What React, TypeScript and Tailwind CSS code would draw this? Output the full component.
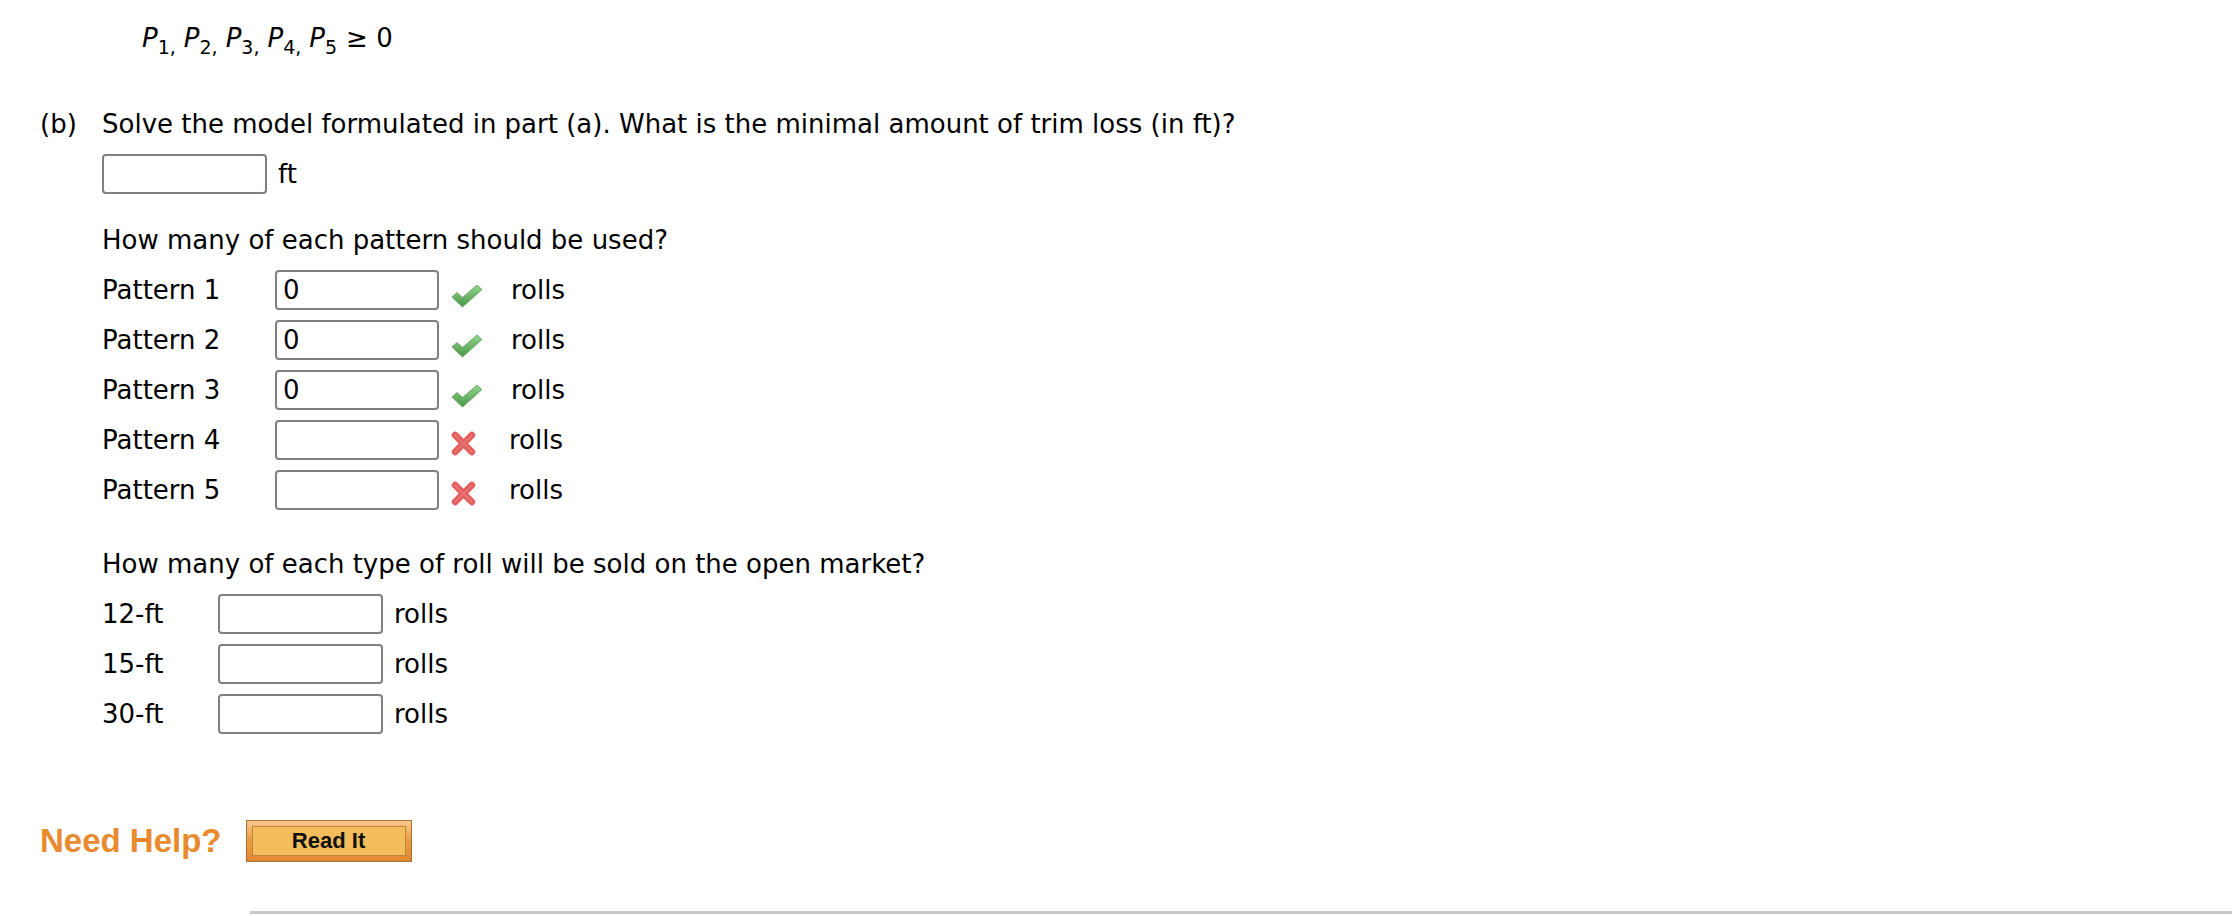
import React from 'react';

const Check = () => (
  <svg width="32" height="24" viewBox="0 0 32 24">
    <defs>
      <linearGradient id="chk" x1="0" y1="0" x2="0" y2="1">
        <stop offset="0" stopColor="#92d48c" />
        <stop offset="1" stopColor="#4a984a" />
      </linearGradient>
    </defs>
    <path
      d="M1 13 L6 8.5 L11.5 13.5 L26 1 L31 5.5 L11.5 23 Z"
      fill="url(#chk)"
      stroke="#5a9c55"
      strokeWidth="0.8"
      strokeLinejoin="round"
    />
  </svg>
);

const Cross = () => (
  <svg width="25" height="25" viewBox="0 0 24 24">
    <path d="M4 4 L20 20 M20 4 L4 20" stroke="#e35d5d" strokeWidth="6.5" strokeLinecap="round" />
    <path d="M4 4 L20 20 M20 4 L4 20" stroke="#f08a8a" strokeWidth="2" strokeLinecap="round" opacity="0.5" />
  </svg>
);

const Box = ({ value = '', w }: { value?: string; w: string }) => (
  <input
    readOnly
    defaultValue={value}
    className={`${w} h-[40px] rounded-[4px] border-2 border-[#808080] bg-white px-[6px] text-[26px] text-black outline-none font-['DejaVu_Sans',sans-serif]`}
  />
);

const patterns = [
  { label: 'Pattern 1', value: '0', ok: true },
  { label: 'Pattern 2', value: '0', ok: true },
  { label: 'Pattern 3', value: '0', ok: true },
  { label: 'Pattern 4', value: '', ok: false },
  { label: 'Pattern 5', value: '', ok: false },
];

const markets = ['12-ft', '15-ft', '30-ft'];

const Sub = ({ n }: { n: string }) => (
  <span className="relative top-[9px] text-[19px] not-italic">{n},</span>
);

export default function App() {
  return (
    <div className="flex h-[916px] w-[2232px] flex-col overflow-hidden bg-white text-[26px] text-black font-['DejaVu_Sans',sans-serif]">
      {/* constraint line */}
      <div className="mt-[13px] flex h-[50px] items-center pl-[142px]">
        <span className="italic">P</span>
        <Sub n="1" />
        <span className="ml-[8px] italic">P</span>
        <Sub n="2" />
        <span className="ml-[8px] italic">P</span>
        <Sub n="3" />
        <span className="ml-[8px] italic">P</span>
        <Sub n="4" />
        <span className="ml-[8px] italic">P</span>
        <span className="relative top-[9px] text-[19px]">5</span>
        <span className="ml-[9px]">≥ 0</span>
      </div>

      {/* part b */}
      <div className="mt-[36px] flex h-[50px] items-center pl-[40px]">
        <span className="w-[62px]">(b)</span>
        <span>Solve the model formulated in part (a). What is the minimal amount of trim loss (in ft)?</span>
      </div>
      <div className="flex h-[50px] items-center pl-[102px]">
        <Box w="w-[165px]" />
        <span className="ml-[11px]">ft</span>
      </div>

      <div className="mt-[16px] flex h-[50px] items-center pl-[102px]">How many of each pattern should be used?</div>
      {patterns.map((p) => (
        <div key={p.label} className="flex h-[50px] items-center pl-[102px]">
          <span className="w-[173px]">{p.label}</span>
          <Box value={p.value} w="w-[164px]" />
          <span className={`ml-[12px] flex w-[32px] ${p.ok ? 'mt-[12px]' : 'mt-[6px]'}`}>
            {p.ok ? <Check /> : <Cross />}
          </span>
          <span className={p.ok ? 'ml-[28px]' : 'ml-[26px]'}>rolls</span>
        </div>
      ))}

      <div className="mt-[24px] flex h-[50px] items-center pl-[102px]">
        How many of each type of roll will be sold on the open market?
      </div>
      {markets.map((m) => (
        <div key={m} className="flex h-[50px] items-center pl-[102px]">
          <span className="w-[116px]">{m}</span>
          <Box w="w-[165px]" />
          <span className="ml-[11px]">rolls</span>
        </div>
      ))}

      {/* help */}
      <div className="mt-[77px] flex h-[50px] items-center pl-[40px] font-['Liberation_Sans',Arial,sans-serif]">
        <span className="text-[33px] font-bold text-[#e88a30]">Need Help?</span>
        <button className="ml-[24px] flex h-[42px] w-[166px] items-center justify-center border border-[#a8723a] bg-gradient-to-b from-[#f6c98a] via-[#ec9a3e] to-[#e08a34] p-[5px]">
          <span className="flex h-full w-full items-center justify-center border border-[#c4833c] bg-[#f3bd5b] text-[22px] font-bold leading-none text-[#111]">
            Read It
          </span>
        </button>
      </div>

      <div className="mt-[45px] ml-[250px] h-[3px] shrink-0 bg-[#c8c8c8]" />
    </div>
  );
}
